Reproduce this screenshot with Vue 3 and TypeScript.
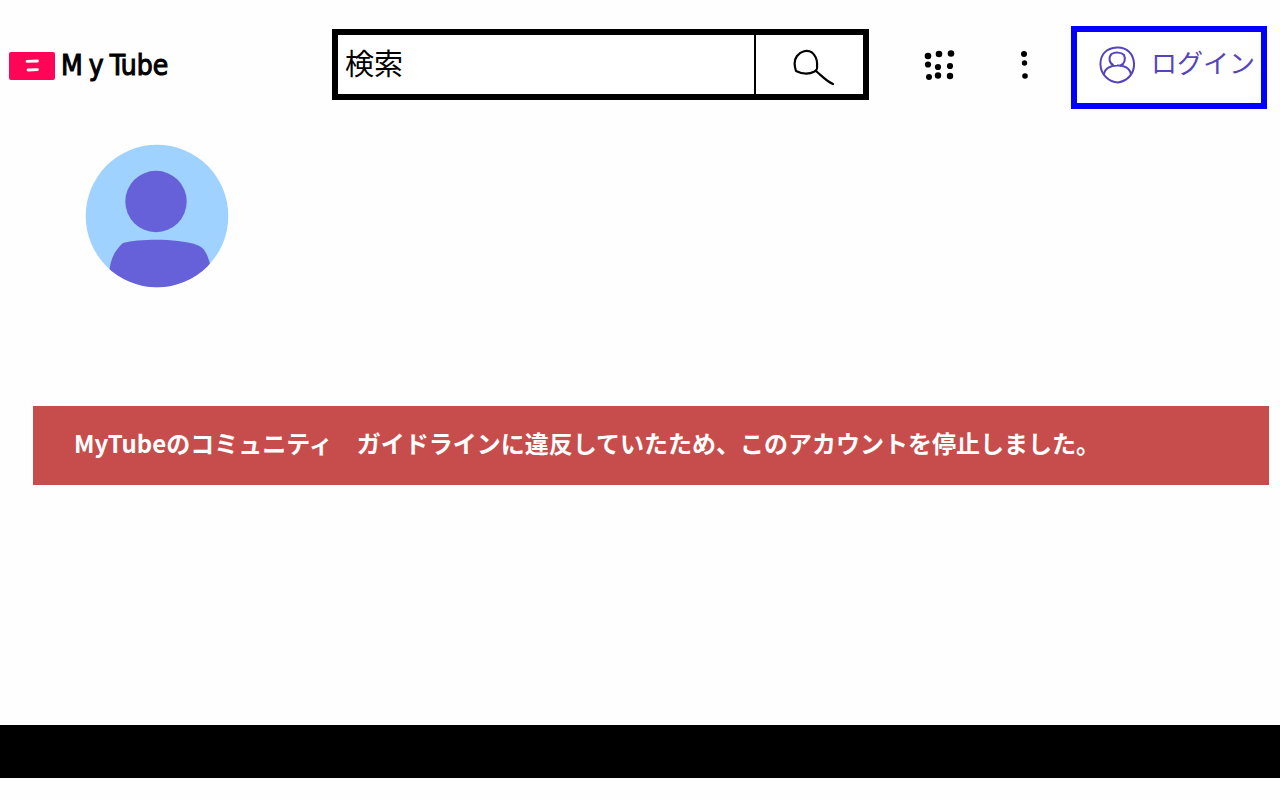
<script setup lang="ts">
import { ref } from 'vue'

const query = ref('')

interface Dot {
  x: number
  y: number
  r: number
}

const appDots: Dot[] = [
  { x: 5, y: 8, r: 3.3 },
  { x: 16, y: 6, r: 3.3 },
  { x: 28, y: 5.5, r: 3.3 },
  { x: 5, y: 16.5, r: 3.1 },
  { x: 15, y: 19, r: 3.1 },
  { x: 27, y: 18, r: 3.1 },
  { x: 6, y: 29, r: 3 },
  { x: 15, y: 27.5, r: 3.2 },
  { x: 27, y: 28, r: 3.2 },
]

const menuDots: Dot[] = [
  { x: 5, y: 6, r: 3 },
  { x: 5.5, y: 15, r: 2.7 },
  { x: 6, y: 28, r: 2.8 },
]
</script>

<template>
  <div class="page">
    <header class="header">
      <a class="logo" href="#" aria-label="My Tube">
        <svg class="logo-mark" width="46" height="28" viewBox="0 0 46 28" aria-hidden="true">
          <rect width="46" height="28" rx="2" fill="#ff0558" />
          <path d="M18 9.300 L28.500 9 M19 18 L28.500 17.600" stroke="#fff" stroke-width="2.800" stroke-linecap="round" />
        </svg>
        <span class="logo-text"><span>M</span><span>y</span><span>Tube</span></span>
      </a>

      <form class="search" role="search" @submit.prevent>
        <input v-model="query" class="search-input" type="text" placeholder="検索" aria-label="検索" />
        <button class="search-button" type="submit" aria-label="検索">
          <svg width="44" height="38" viewBox="0 0 44 38" fill="none" stroke="#000" stroke-width="2.2" stroke-linecap="round" stroke-linejoin="round" aria-hidden="true">
            <path d="M4 23 C2.300 18 2 12 5 8 C9 3 15 1.500 20 4.500 C24 8 25.500 13 25 18 C25.500 21 25 22 22.500 23.500 C17 26.500 10 26 4 23 Z" />
            <path d="M24 23 C30 28 34 33 41 36" />
          </svg>
        </button>
      </form>

      <button class="icon-button apps" type="button" aria-label="アプリ">
        <svg width="34" height="34" viewBox="0 0 34 34" aria-hidden="true">
          <circle v-for="(d, i) in appDots" :key="i" :cx="d.x" :cy="d.y" :r="d.r" />
        </svg>
      </button>
      <button class="icon-button more" type="button" aria-label="メニュー">
        <svg width="12" height="34" viewBox="0 0 12 34" aria-hidden="true">
          <circle v-for="(d, i) in menuDots" :key="i" :cx="d.x" :cy="d.y" :r="d.r" />
        </svg>
      </button>

      <button class="login" type="button">
        <svg width="36" height="38" viewBox="0 0 36 38" fill="none" stroke="#5544bd" stroke-width="2" stroke-linecap="round" stroke-linejoin="round" aria-hidden="true">
          <path d="M18 1.500 C28 1 34.500 8 35 17.500 C35.500 27 29 35 19 36.500 C10 36 2 29 1.500 19 C1 9 7 2 18 1.500 Z" />
          <path d="M14 19 C10 17 9.500 11 12.500 8 C16 6 22 6 25 9 C27 13 25.500 18 21.500 19.500" />
          <path d="M5 28.500 C5.500 22 12 19.500 18 19.500 C25 19 31 22 32 28.500" />
        </svg>
        <span class="login-label">ログイン</span>
      </button>
    </header>

    <main class="main">
      <svg class="avatar" width="144" height="144" viewBox="0 0 144 144" role="img" aria-label="アカウント">
        <defs>
          <clipPath id="avatar-clip"><circle cx="72" cy="72" r="71.300" /></clipPath>
        </defs>
        <circle cx="72" cy="72" r="71.300" fill="#9fd2ff" />
        <g clip-path="url(#avatar-clip)" fill="#6661d8">
          <circle cx="71" cy="57.500" r="30.700" />
          <path d="M24 130 C25 115 30 106 38 99 C55 95 91 94 112 101 C120 104 123 111 126 124 L126 144 H24 Z" />
        </g>
      </svg>

      <p class="notice" role="alert">MyTubeのコミュニティ　ガイドラインに違反していたため、このアカウントを停止しました。</p>
    </main>

    <footer class="footer"></footer>
  </div>
</template>

<style>
body {
  margin: 0;
  background: #fefefe;
}
</style>

<style scoped>
.page {
  display: flex;
  flex-direction: column;
  min-height: 100vh;
  box-sizing: border-box;
  padding-bottom: 22px;
  font-family: "Liberation Sans", "Noto Sans CJK JP", sans-serif;
  color: #000;
}

.header {
  display: flex;
  align-items: flex-start;
  padding: 26px 13px 0 9px;
}

.logo {
  display: flex;
  align-items: center;
  flex: none;
  gap: 6px;
  width: 323px;
  height: 80px;
  color: #000;
  text-decoration: none;
}

.logo-text {
  display: flex;
  gap: 6px;
  font-family: "Liberation Sans Narrow", "DejaVu Sans Condensed", "Noto Sans CJK JP", sans-serif;
  font-size: 28px;
  line-height: 40px;
  -webkit-text-stroke: 1px #000;
}

.search {
  display: flex;
  flex: 1;
  min-width: 0;
  height: 71px;
  box-sizing: border-box;
  margin-top: 3px;
  border: 6px solid #000;
  background: #fff;
}

.search-input {
  flex: 1;
  min-width: 0;
  padding: 0 7px 6px;
  border: 0;
  outline: 0;
  background: transparent;
  color: #000;
  font-family: "Noto Sans CJK JP", sans-serif;
  font-size: 29px;
}

.search-input::placeholder {
  color: #000;
  opacity: 1;
}

.search-button {
  display: flex;
  align-items: center;
  justify-content: center;
  width: 109px;
  padding: 4px 0 0 10px;
  border: 0;
  border-left: 2px solid #000;
  background: transparent;
}

.icon-button {
  display: flex;
  align-items: center;
  height: 78px;
  padding: 0;
  border: 0;
  background: transparent;
}

.apps {
  margin-left: 54px;
}

.more {
  margin-left: 62px;
}

.login {
  display: flex;
  align-items: center;
  gap: 16px;
  height: 83px;
  box-sizing: border-box;
  margin-left: 40px;
  padding: 0 6px 6px 22px;
  border: 6px solid #0000ff;
  background: #fff;
  color: #5544bd;
  font-family: "Noto Sans CJK JP", sans-serif;
  font-size: 26px;
  white-space: nowrap;
}

.login-label {
  padding-bottom: 6px;
}

.main {
  flex: 1;
}

.avatar {
  display: block;
  margin: 35px 0 0 85px;
}

.notice {
  display: flex;
  align-items: center;
  min-height: 79px;
  box-sizing: border-box;
  margin: 118px 11px 0 33px;
  padding: 0 41px 6px;
  background: #c74d4c;
  color: #fff;
  font-family: "Noto Sans CJK JP", sans-serif;
  font-size: 24px;
  font-weight: 700;
  line-height: 36px;
}

.footer {
  height: 53px;
  background: #000;
}
</style>
